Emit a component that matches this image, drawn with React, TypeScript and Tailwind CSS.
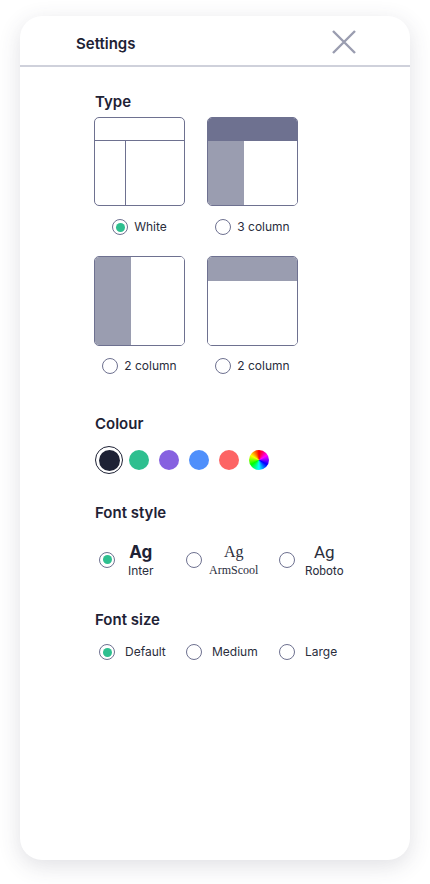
import { useState } from 'react';

type Layout = 'white' | 'three' | 'twoLeft' | 'twoTop';

const Radio = ({ checked }: { checked: boolean }) => (
  <span className="w-4 h-4 rounded-full border border-[#6e7190] bg-white flex items-center justify-center shrink-0">
    {checked && <span className="w-[9px] h-[9px] rounded-full bg-[#2ebf8f]" />}
  </span>
);

const Tile = ({ kind }: { kind: Layout }) => {
  if (kind === 'white') {
    return (
      <div className="w-[91px] h-[89px] rounded-[5px] border border-[#6e7190] overflow-hidden flex flex-col">
        <div className="h-[23px] border-b border-[#6e7190]" />
        <div className="flex-1 flex">
          <div className="w-[31px] border-r border-[#6e7190]" />
          <div className="flex-1" />
        </div>
      </div>
    );
  }
  if (kind === 'three') {
    return (
      <div className="w-[91px] h-[89px] rounded-[5px] border border-[#6e7190] overflow-hidden flex flex-col">
        <div className="h-[23px] bg-[#6e7190]" />
        <div className="flex-1 flex">
          <div className="w-[36px] bg-[#9a9db0]" />
          <div className="flex-1 bg-white" />
        </div>
      </div>
    );
  }
  if (kind === 'twoLeft') {
    return (
      <div className="w-[91px] h-[90px] rounded-[5px] border border-[#6e7190] overflow-hidden flex">
        <div className="w-[36px] bg-[#9a9db0]" />
        <div className="flex-1 bg-white" />
      </div>
    );
  }
  return (
    <div className="w-[91px] h-[90px] rounded-[5px] border border-[#6e7190] overflow-hidden flex flex-col">
      <div className="h-[24px] bg-[#9a9db0]" />
      <div className="flex-1 bg-white" />
    </div>
  );
};

const layouts: { kind: Layout; label: string }[] = [
  { kind: 'white', label: 'White' },
  { kind: 'three', label: '3 column' },
  { kind: 'twoLeft', label: '2 column' },
  { kind: 'twoTop', label: '2 column' },
];

const colours = ['#1e2235', '#2ebf8f', '#8661e0', '#4f8ffb', '#fd6464'];

const App = () => {
  const [layout, setLayout] = useState<Layout>('white');
  const [colour, setColour] = useState(0);
  const [font, setFont] = useState(0);
  const [size, setSize] = useState(0);

  return (
    <div className="min-h-screen bg-white pt-4 px-5 font-['Inter',sans-serif] text-[#1e2235]">
      <div className="h-[844px] rounded-[22px] bg-white shadow-[0_6px_22px_rgba(60,64,90,0.16)] overflow-hidden">
        {/* Header */}
        <div className="h-[49px] flex items-center justify-between pl-[56px] pr-[54px] pt-[7px]">
          <h1 className="text-[15px] font-semibold">Settings</h1>
          <button className="w-6 h-6 text-[#9a9db0] -mt-[5px]">
            <svg viewBox="0 0 24 24" className="w-6 h-6" fill="none" stroke="currentColor" strokeWidth="2.4">
              <path d="M1 1L23 23M23 1L1 23" />
            </svg>
          </button>
        </div>
        <div className="h-[2px] bg-[#cfd1db]" />

        <div className="pl-[74px]">
          {/* Type */}
          <h2 className="mt-[25px] text-[15px] leading-5 font-semibold pl-px">Type</h2>
          <div className="mt-[5px] grid grid-cols-[91px_91px] gap-x-[22px] gap-y-[19px]">
            {layouts.map((l, i) => (
              <div key={i} className="flex flex-col items-center">
                <Tile kind={l.kind} />
                <button
                  onClick={() => setLayout(l.kind)}
                  className={`flex items-center gap-[6px] h-5 ${i < 2 ? 'mt-[11px]' : 'mt-[10px]'}`}
                >
                  <Radio checked={layout === l.kind && i !== 3} />
                  <span className="text-[12px] text-[#2a2d3c]">{l.label}</span>
                </button>
              </div>
            ))}
          </div>

          {/* Colour */}
          <h2 className="mt-[38px] text-[15px] leading-5 font-semibold pl-px">Colour</h2>
          <div className="mt-3 flex items-center h-7 gap-[10px] pl-px">
            {colours.map((c, i) => (
              <button
                key={c}
                onClick={() => setColour(i)}
                className={
                  colour === i
                    ? 'w-[28px] h-[28px] rounded-full border-[1.5px] border-[#1e2235] flex items-center justify-center -mr-[4px]'
                    : 'w-5 h-5 rounded-full'
                }
                style={colour === i ? undefined : { background: c }}
              >
                {colour === i && <span className="w-[21px] h-[21px] rounded-full" style={{ background: c }} />}
              </button>
            ))}
            <span className="w-5 h-5 rounded-full bg-[conic-gradient(#ff0000,#ff00ff,#0000ff,#00ffff,#00ff00,#ffff00,#ff0000)]" />
          </div>

          {/* Font style */}
          <h2 className="mt-[29px] text-[15px] leading-5 font-semibold pl-px">Font style</h2>
          <div className="mt-[17px] grid grid-cols-[87px_93px_auto] pl-[5px]">
            <button onClick={() => setFont(0)} className="flex items-center gap-[13px]">
              <Radio checked={font === 0} />
              <span className="flex flex-col items-center">
                <span className="text-[17px] leading-[22px] font-bold">Ag</span>
                <span className="text-[12px] leading-4 text-[#2a2d3c]">Inter</span>
              </span>
            </button>
            <button onClick={() => setFont(1)} className="flex items-center gap-[7px]">
              <Radio checked={font === 1} />
              <span className="flex flex-col items-center font-['Liberation_Serif',serif] text-[#2a2d3c]">
                <span className="text-[16px] leading-[21px]">Ag</span>
                <span className="text-[12px] leading-4">ArmScool</span>
              </span>
            </button>
            <button onClick={() => setFont(2)} className="flex items-center gap-[10px]">
              <Radio checked={font === 2} />
              <span className="flex flex-col items-center font-['Roboto',sans-serif] text-[#2a2d3c] pt-[2px]">
                <span className="text-[17px] leading-[21px]">Ag</span>
                <span className="text-[12px] leading-4">Roboto</span>
              </span>
            </button>
          </div>

          {/* Font size */}
          <h2 className="mt-[31px] text-[15px] leading-5 font-semibold pl-px">Font size</h2>
          <div className="mt-3 grid grid-cols-[87px_93px_auto] pl-[5px] h-5">
            {['Default', 'Medium', 'Large'].map((s, i) => (
              <button key={s} onClick={() => setSize(i)} className="flex items-center gap-[10px]">
                <Radio checked={size === i} />
                <span className="text-[12px] text-[#2a2d3c]">{s}</span>
              </button>
            ))}
          </div>
        </div>
      </div>
    </div>
  );
};

export default App;
